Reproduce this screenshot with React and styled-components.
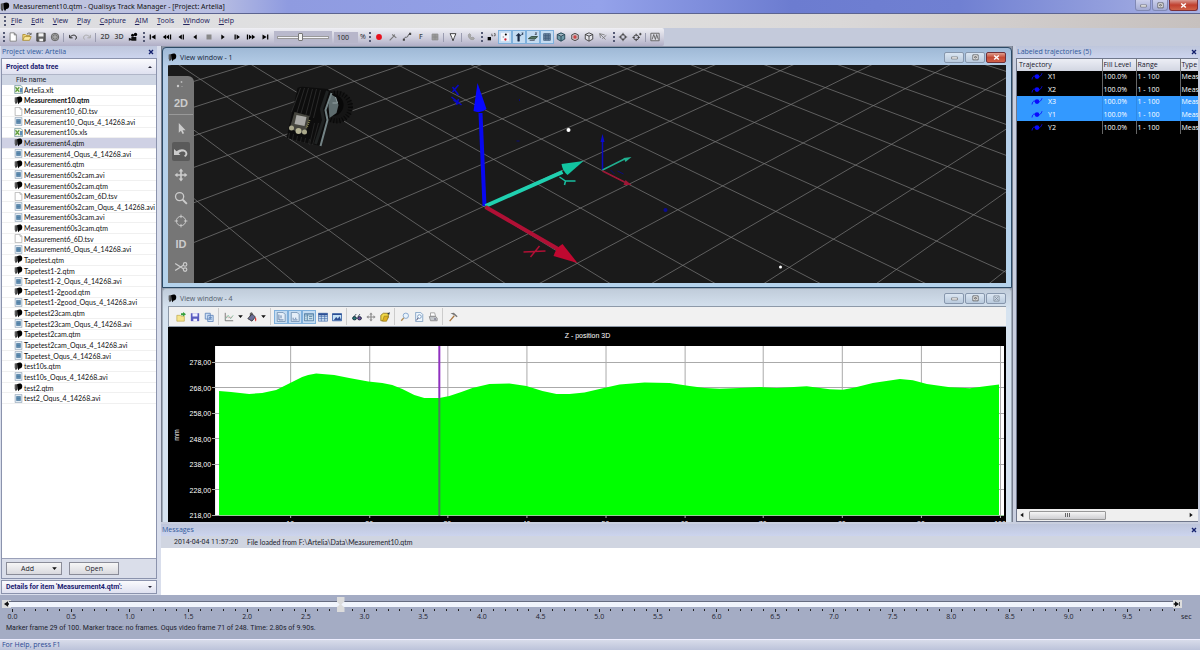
import React, { useState } from 'react';
import styled, { createGlobalStyle, css } from 'styled-components';

const files = [
  ['xls', 'Artelia.xlt'],
  ['qtm', 'Measurement10.qtm'],
  ['tsv', 'Measurement10_6D.tsv'],
  ['avi', 'Measurement10_Oqus_4_14268.avi'],
  ['xls', 'Measurement10s.xls'],
  ['qtm', 'Measurement4.qtm'],
  ['avi', 'Measurement4_Oqus_4_14268.avi'],
  ['qtm', 'Measurement6.qtm'],
  ['avi', 'Measurement60s2cam.avi'],
  ['qtm', 'Measurement60s2cam.qtm'],
  ['tsv', 'Measurement60s2cam_6D.tsv'],
  ['avi', 'Measurement60s2cam_Oqus_4_14268.avi'],
  ['avi', 'Measurement60s3cam.avi'],
  ['qtm', 'Measurement60s3cam.qtm'],
  ['tsv', 'Measurement6_6D.tsv'],
  ['avi', 'Measurement6_Oqus_4_14268.avi'],
  ['qtm', 'Tapetest.qtm'],
  ['qtm', 'Tapetest1-2.qtm'],
  ['avi', 'Tapetest1-2_Oqus_4_14268.avi'],
  ['qtm', 'Tapetest1-2good.qtm'],
  ['avi', 'Tapetest1-2good_Oqus_4_14268.avi'],
  ['qtm', 'Tapetest23cam.qtm'],
  ['avi', 'Tapetest23cam_Oqus_4_14268.avi'],
  ['qtm', 'Tapetest2cam.qtm'],
  ['avi', 'Tapetest2cam_Oqus_4_14268.avi'],
  ['avi', 'Tapetest_Oqus_4_14268.avi'],
  ['qtm', 'test10s.qtm'],
  ['avi', 'test10s_Oqus_4_14268.avi'],
  ['qtm', 'test2.qtm'],
  ['avi', 'test2_Oqus_4_14268.avi'],
];

const menus = ['File', 'Edit', 'View', 'Play', 'Capture', 'AIM', 'Tools', 'Window', 'Help'];

const trajectories = ['X1', 'X2', 'X3', 'Y1', 'Y2'];

// every drawing lives on a 12x12 canvas
const icons = {
  qtm: (
    <>
      <path d="M1 2l3-.5V9L2.500 11 1 8z" fill="#222" />
      <path d="M4 1.500C7 0 10.500 0 11 3.500c.2 3-1 5-3.500 5L6 11 4.500 8z" fill="#000" />
      <path d="M2.500 2v7" stroke="#ddd" strokeWidth=".7" />
    </>
  ),
  xls: (
    <>
      <path d="M1 .5h8l2.500 2.500v8.500H1z" fill="#eef3e6" stroke="#6a8f9b" />
      <path d="M2 3l5 6M7 3L2 9" stroke="#5f9e3a" strokeWidth="1.600" />
      <path d="M8 4h3v6H8z" fill="#5e8db8" />
    </>
  ),
  tsv: <path d="M1.500 .5h6.500l2.500 2.500v8.500h-9zM8 .5V3h2.500" fill="#fff" stroke="#aaa" />,
  avi: (
    <>
      <path d="M1.500 .5h9v11h-9z" fill="#e2ecf4" stroke="#9ab" />
      <path d="M3 3h6v6H3z" fill="#3f7199" />
      <path d="M3 5h6M3 7h6" stroke="#8fb5d0" strokeWidth=".7" />
    </>
  ),
  newFile: <path d="M2.500 1h5l2.500 2.500V11H2.500zM7.500 1v2.500H10" fill="#fff" stroke="#777" />,
  open: (
    <>
      <path d="M1 10V3h3l1 1h4v2" fill="#f4d878" stroke="#a98b30" />
      <path d="M1 10l2-4.500h8L9 10z" fill="#fbe99c" stroke="#a98b30" />
      <path d="M6 2.500C8 .5 10 1 10.500 3M9 2.800h2V1" fill="none" stroke="#555" />
    </>
  ),
  save: (
    <>
      <path d="M1 1.500h10v9.500H1z" fill="#666" stroke="#333" />
      <path d="M3 1.500h6v4H3zM4 8h4.500v3H4z" fill="#f2f2f2" />
    </>
  ),
  saveBlue: (
    <>
      <path d="M1 1.500h10v9.500H1z" fill="#5a5cc0" />
      <path d="M3 1.500h6v4H3zM4 8h4.500v3H4z" fill="#eef" />
    </>
  ),
  gear: (
    <>
      <circle cx="6" cy="6" r="4.500" fill="#aaa" stroke="#555" />
      <circle cx="6" cy="6" r="2.500" fill="#ddd" stroke="#555" />
      <circle cx="6" cy="6" r=".8" fill="#444" />
    </>
  ),
  undo: <path d="M2 3.500v3.500h3.500M2.500 6.500C4 3.500 9 2.500 10 6c.3 1.500-.4 2.500-1.500 3" fill="none" stroke="#222" strokeWidth="1.200" />,
  redo: <path d="M10 3.500v3.500H6.500M9.500 6.500C8 3.500 3 2.500 2 6c-.3 1.500.4 2.500 1.500 3" fill="none" stroke="#aaa" strokeWidth="1.200" />,
  camera: (
    <>
      <path d="M4 6h6v4.500H4zM1 7l3 1v1.500l-3 1z" fill="#111" />
      <circle cx="5.500" cy="3.800" r="1.800" />
      <circle cx="9" cy="3" r="2" />
    </>
  ),
  first: <path d="M2 3h1.500v6H2zM9 3v6L4 6z" />,
  fastBack: <path d="M5 3v6L1 6zM8.500 3v6L5 6zM9.500 3H11v6H9.500z" />,
  stepBack: <path d="M7 3v6L3 6zM8 3h1.500v6H8z" />,
  playBack: <path d="M8 3v6L4 6z" />,
  stop: <path d="M3 3h6v6H3z" fill="#888" />,
  play: <path d="M4 3v6l4-3z" />,
  step: <path d="M5.500 3v6l4-3zM3 3h1.500v6H3z" />,
  fastForward: <path d="M7 3v6l4-3zM3.500 3v6L7 6zM1 3h1.500v6H1z" />,
  last: <path d="M3 3v6l5-3zM8.500 3H10v6H8.500z" />,
  record: <circle cx="6" cy="6" r="3.500" fill="#e8101c" />,
  marker: <path d="M2 10l5-5M5 3l5 4M7 5l1-2" stroke="#777" strokeWidth="1.300" fill="none" />,
  curve: (
    <>
      <path d="M2 9C4 4 6 8 7 5s2-3 3-3" fill="none" stroke="#444" />
      <path d="M1 8h2.500v2.500H1zM8.500 1H11v2.500H8.500z" fill="#444" />
    </>
  ),
  region: <path d="M2.500 2.500h7v7h-7zM2.500 5h7M2.500 7h7M5 2.500v7M7 2.500v7" fill="#aaa" stroke="#888" />,
  filter: <path d="M2.500 2h7L7.500 6.500 6 10.500 4.500 6.500z" fill="#fff" stroke="#222" />,
  phone: <path d="M3 3c-1 3 2 7 6 6l1-1.500L8 6 7 7 5 5l1-1-1.500-2z" fill="#aaa" stroke="#999" />,
  label: (
    <>
      <path d="M2 6h4v4H2z" />
      <path d="M7 2v2.500h1.500M9.500 2h1.500v2.500h-1.500" fill="none" stroke="#333" strokeWidth=".8" />
    </>
  ),
  points: (
    <>
      <path d="M1 1h10v10H1z" fill="#f2f6fc" />
      <circle cx="7" cy="3" r="1.200" />
      <circle cx="4" cy="6" r="1" fill="#999" />
      <circle cx="6.500" cy="9" r="1.400" fill="#d02030" />
    </>
  ),
  axis: <path d="M4.500 11V4.500H2.500L5.500 1.500 8.500 4.500H6.500V11zM9 1h2M11 1L9 3h2" stroke="#1b2a44" strokeWidth=".6" fill="#1b2a44" />,
  floor: (
    <>
      <path d="M.5 8L4 5.500h7.500L8.500 8.500z" fill="#5b7a6a" stroke="#23402f" />
      <path d="M2 10h6M8.500 1h2L8.500 3h2" stroke="#223" fill="none" strokeWidth=".8" />
    </>
  ),
  grid: <path d="M2 2h8v8H2zM2 4h8M2 6h8M2 8h8M4 2v8M6 2v8M8 2v8" fill="#8aa0b8" stroke="#3c5878" strokeWidth=".9" />,
  cubeTeal: <path d="M6 1l4.500 2v5.500L6 11 1.500 8.500V3zM1.500 3L6 5l4.500-2M6 5v6" fill="#6f9aa8" stroke="#1d3d4c" />,
  cubeRed: (
    <>
      <path d="M6 1.500l4 2v5L6 10.500 2 8.500v-5z" fill="#c8b4b8" stroke="#444" />
      <circle cx="6" cy="6" r="2" fill="#c44" />
    </>
  ),
  cube: <path d="M6 1l4.500 2v5.500L6 11 1.500 8.500V3zM1.500 3L6 5l4.500-2M6 5v6" fill="#e4e4ea" stroke="#333" />,
  arrowCut: <path d="M2 2l7 7M2 2l1 5M2 2l6 1.500M5 8l5-4" fill="none" stroke="#777" />,
  crosshair: (
    <>
      <circle cx="6" cy="6" r="3" fill="none" stroke="#333" />
      <path d="M6 1v3.500M6 7.500V11M1 6h3.500M7.500 6H11" stroke="#333" />
    </>
  ),
  crosshairPlus: (
    <>
      <circle cx="5" cy="6.500" r="3" fill="none" stroke="#333" />
      <path d="M5 2v3M5 8v3M.5 6.500h3M6.500 6.500h3M8.500 2.500h3M10 1v3" stroke="#333" />
    </>
  ),
  graph: <path d="M1 1.500h10v9H1zM2.500 9l2-6 2 6 1.500-6L10 9" fill="#dcdce4" stroke="#555" />,
  openGreen: (
    <>
      <path d="M1 11V4h4l1 1h4v6z" fill="#f6e48c" stroke="#b39b3a" strokeWidth=".7" />
      <path d="M6 1.500h2.500V0L12 2.800 8.500 5.500V4H6z" fill="#36a03c" />
    </>
  ),
  copy: <path d="M1.500 1.500h6v7h-6zM4.500 4h6.500v7.500H4.500zM6 6.500h3.500M6 8.500h3.500" fill="#cfe0f5" stroke="#5b82b8" />,
  axes: (
    <>
      <path d="M1.500 1v9.500H11" fill="none" stroke="#666" />
      <path d="M2 8l3-4 3 4 3-4" fill="none" stroke="#7b9" />
      <path d="M2 4l3 3 5-1" fill="none" stroke="#c99" strokeWidth=".7" />
    </>
  ),
  bucket: (
    <>
      <path d="M1 8L6 2l4 4-4 5z" fill="#6b6f98" stroke="#333" />
      <path d="M10 6c1.500 1.500 1.500 4 .5 5.500-1-1-1.300-3-.5-5.500" fill="#d33" />
      <path d="M4 5V1.500l2-.5v3" fill="none" stroke="#333" />
    </>
  ),
  pageAxis: (
    <>
      <path d="M1.500 .5h7l2.500 2.500v8.500H1.500z" fill="#e4eef8" stroke="#6d8dad" />
      <path d="M3.500 3v6.500H9M6 4v3.500" fill="none" stroke="#4c6f9c" />
    </>
  ),
  pageDots: (
    <>
      <path d="M1.500 .5h7l2.500 2.500v8.500H1.500z" fill="#e4eef8" stroke="#6d8dad" />
      <path d="M3 9.500h6M3 7.500h1.500M6 7.500h1.500" fill="none" stroke="#4c6f9c" />
    </>
  ),
  legend: <path d="M.5 2h11v8.500H.5zM.5 3.500h11M4 3v7M6 5.500h4M6 8h4M1.800 5.500h1M1.800 8h1" fill="#cfe4ee" stroke="#2f628f" strokeWidth=".8" />,
  table: (
    <>
      <path d="M.5 1.500h11v9.500H.5zM.5 5.500h11M.5 8h11M4 2v9M8 2v9" fill="#d4e6f6" stroke="#4068a8" strokeWidth=".8" />
      <path d="M.5 1.500h11V4H.5z" fill="#2c4f94" />
    </>
  ),
  picture: (
    <>
      <path d="M.5 2h11v8.500H.5z" fill="#c6e2f5" stroke="#2c58a0" />
      <path d="M.5 2h11v1.500H.5zM2 10l3-4 2 2 2-3 2 5z" fill="#2c4f94" />
    </>
  ),
  glasses: (
    <>
      <path d="M2 6l3-3.500M7 6l2.500-3.500" stroke="#234" />
      <ellipse cx="3" cy="7.500" rx="2.300" ry="2" fill="#2a7a78" stroke="#123" />
      <ellipse cx="9" cy="7.500" rx="2.300" ry="2" fill="#6a4a9a" stroke="#123" />
    </>
  ),
  move: <path d="M6 .5L8 3H6.700v2.300H9V4l2.500 2L9 8V6.700H6.700V9H8l-2 2.500L4 9h1.300V6.700H3V8L.5 6 3 4v1.300h2.300V3H4z" fill="currentColor" />,
  box3d: (
    <>
      <path d="M1 4l3-2.500h6V7l-3 3.500H1z" fill="#f0d848" stroke="#8c7418" />
      <path d="M5 5h5l-2 6H3z" fill="#e0b020" stroke="#8c7418" strokeWidth=".7" />
      <path d="M8.500 2.500L11.500 0v3z" fill="#234" />
    </>
  ),
  zoom: (
    <>
      <circle cx="7" cy="4.500" r="3.200" fill="#e8f3fc" stroke="#7a9cc8" />
      <path d="M4.500 7L1.500 10.500" stroke="#b08a50" strokeWidth="1.600" />
    </>
  ),
  zoomPage: (
    <>
      <path d="M2 .5h6l2.500 2.500v8.500H2z" fill="#eef5fc" stroke="#7a9cc0" />
      <circle cx="6.500" cy="5.500" r="2.200" fill="#fff" stroke="#6a8fb8" />
      <path d="M5 7L3 10" stroke="#557" strokeWidth="1.200" />
    </>
  ),
  printer: (
    <>
      <path d="M3 1h5l1 4H3z" fill="#fff" stroke="#999" />
      <path d="M1.500 5.500h8l1.500 2v3H3z" fill="#c4c8cc" stroke="#888" />
      <circle cx="8.500" cy="8.500" r="1.300" fill="#889" />
    </>
  ),
  hammer: (
    <>
      <path d="M2 11l5.500-6.500" stroke="#a8743c" strokeWidth="1.400" />
      <path d="M3 1.500l4-.5 4.500 4-1 1.200L7.500 4z" fill="#777" />
    </>
  ),
  caret: <path d="M2 4h8L6 8.500z" fill="#111" />,
  up: <path d="M3 7.500h6L6 4.500z" fill="#223" />,
  down: <path d="M3 4.500h6L6 7.500z" fill="#223" />,
  left: <path d="M8 2.500v7L3.500 6z" fill="#111" />,
  right: <path d="M4 2.500v7L8.500 6z" fill="#111" />,
  rangeStart: <path d="M9 2v8L3 6zM9 5h2v2H9z" fill="#111" />,
  rangeEnd: <path d="M3 2v8l6-4zM1 5h2v2H1zM9.500 3h1v6h-1z" fill="#111" />,
  dots: (
    <>
      <circle cx="3" cy="8" r="1.200" fill="#ccc" />
      <circle cx="6.500" cy="4" r=".9" fill="#bbb" />
      <circle cx="7" cy="8.500" r=".5" fill="#bbb" />
    </>
  ),
  pointer: <path d="M3.500 1v9l2-2 1.500 3 1.400-.7L7 7.500h2.800z" fill="#ccc" />,
  rotate: <path d="M0 3.500V8.500h5.500L4 7C6 5 9.500 5 9.800 7.200c.1.800-.4 1.400-1.200 1.800l.9 1.200c1.400-.7 2.200-1.900 1.900-3.400C10.800 3.300 5.500 2.300 2.200 5.400z" fill="#ccc" />,
  lens: (
    <>
      <circle cx="4.800" cy="4.800" r="3.500" fill="none" stroke="#ccc" strokeWidth="1.100" />
      <path d="M7.500 7.500l3.500 3.500" stroke="#ccc" strokeWidth="1.600" />
    </>
  ),
  target: (
    <>
      <circle cx="6" cy="6" r="4" fill="none" stroke="#ccc" strokeWidth=".8" />
      <path d="M6 .5v3M6 8.500v3M.5 6h3M8.500 6h3" stroke="#ccc" strokeWidth=".8" />
    </>
  ),
  scissors: (
    <>
      <path d="M1 3l7 4.500M1 9l7-4.500" stroke="#ccc" strokeWidth="1.100" />
      <circle cx="9.500" cy="3.800" r="1.500" fill="none" stroke="#ccc" />
      <circle cx="9.500" cy="8.200" r="1.500" fill="none" stroke="#ccc" />
    </>
  ),
  traj: (
    <>
      <path d="M0 9C1 3 4 5 6 6s5-1 6-4.500" fill="none" stroke="#0a0aff" />
      <circle cx="6" cy="5.500" r="2.800" fill="#0a0aff" />
    </>
  ),
  close: <path d="M3 3l6 6M9 3L3 9" stroke="currentColor" strokeWidth="2" />,
  minimize: <path d="M1 5h10v3.500H1z" fill="#fff" stroke="#555" />,
  maximize: <path d="M1.500 1.500h9v8.500h-9zM4.500 4.500h3v2.500h-3z" fill="#fff" stroke="#555" strokeWidth="1.400" />,
  cross: <path d="M2 2.500l8 7M10 2.500l-8 7" stroke="#fff" strokeWidth="2.600" />,
  crossGray: <path d="M1.500 1.500h9v9h-9zM3 3l6 6M9 3L3 9" stroke="#78828f" fill="none" strokeWidth="1.200" />,
};

function Icon({ name, size = 10 }) {
  return (
    <svg width={size} height={size} viewBox="0 0 12 12" aria-hidden="true">
      {icons[name]}
    </svg>
  );
}

function Tools({ names, pressed = [] }) {
  return names.map((name, i) => {
    if (name === '|') return <Separator key={i} />;
    if (name === ':') return <Grip key={i} />;
    const text = name.startsWith('#');
    return (
      <ToolButton key={i} aria-label={name.replace('#', '')} $on={pressed.includes(name)} $narrow={name === 'caret'}>
        {text ? name.slice(1) : <Icon name={name} size={name === 'caret' ? 7 : 10} />}
      </ToolButton>
    );
  });
}

// floor square corner (i, j) to view coordinates
function floor(i, j) {
  const w = 1 - 0.0445 * i + 0.041 * j;
  const x = (113 + 147.5 * i + 168 * j) / w;
  const y = (610 + 65.9 * i - 62 * j) / w;
  return [372 + x / 3, y / 3 - 5];
}

function FloorGrid() {
  const lines = [];
  for (let i = -20; i <= 8; i++) lines.push([floor(i, -10), floor(i, 16)]);
  for (let j = -10; j <= 16; j++) lines.push([floor(-20, j), floor(8, j)]);
  return (
    <g stroke="#7c7c7c" strokeWidth=".7">
      {lines.map(([a, b], n) => (
        <line key={n} x1={a[0]} y1={a[1]} x2={b[0]} y2={b[1]} />
      ))}
    </g>
  );
}

function Scene() {
  return (
    <SceneSvg viewBox="0 0 839 218" preserveAspectRatio="xMidYMid slice" role="img" aria-label="3D view">
      <FloorGrid />
      {/* camera */}
      <g>
        <circle cx="169" cy="42" r="16" fill="#141414" />
        <circle cx="169" cy="42" r="14" fill="none" stroke="#080808" strokeWidth="5" strokeDasharray="1 2" />
        <circle cx="165" cy="40" r="11" fill="#080808" />
        <path d="M130 23q3-2 8-1l22 2 6 5-13 52-34-8z" fill="#0d0d0d" />
        <path d="M133 23l-9 24M137 23l-8 26M141 23l-8 27M145 24l-7 27M149 24l-7 28M153 25l-7 28" stroke="#303030" strokeWidth=".8" />
        <path d="M122 68l-1 5M126 69l-1 6M130 71l-1 5M134 72l-1 5M138 73l-1 5M142 74l-1 5M147 58l-5 22M151 58l-6 22" stroke="#2a2a2a" strokeWidth=".8" />
        <path d="M163 29l5 3 3 8-2 8-7 5-1-12z" fill="#5e6c6e" />
        <path d="M168 32l2 6h-5" fill="none" stroke="#94a2a4" />
        <path d="M160 26l-6 18 2 11-8 24" fill="none" stroke="#202323" strokeWidth="3" />
        <path d="M164 28l-6 17 2 10-7 26" fill="none" stroke="#748486" strokeWidth="2" />
        <path d="M127 47l15 4-4 18-16-5z" fill="#45453e" />
        <path d="M129 50l10 2-2 9-10-2z" fill="#a9a9a6" />
        <circle cx="124" cy="63" r="2.500" fill="#aaa88c" />
        <circle cx="131" cy="66" r="3" fill="#b7b596" />
        <circle cx="137" cy="67" r="2.500" fill="#a9a88a" />
        <path d="M142 55l-3 8" stroke="#8c8a55" strokeWidth="2" strokeDasharray="1 1" />
      </g>
      {/* main axes */}
      <path d="M317 141L313 48" stroke="#0808f0" strokeWidth="4" />
      <path d="M310 18l9 26q-6 5-13 2z" fill="#0808ff" />
      <path d="M318 141l77-34" stroke="#20d0b0" strokeWidth="4" />
      <path d="M416 96l-16 14q-5-4-6-11z" fill="#12c4a0" />
      <path d="M318 142l76 44" stroke="#b01035" strokeWidth="4" />
      <path d="M410 198l-24-7q3-9 9-12z" fill="#c00830" />
      <path d="M285 22l6 8M291 20l-6 7M286 35l5 4M291 34l-2 6M284 32l10 8" stroke="#0808c8" strokeWidth="1.500" />
      <path d="M356 187l22-1M363 192l9-11" stroke="#b01035" strokeWidth="1.500" />
      <path d="M392 112l6 4 10 0M398 116l-1 4" fill="none" stroke="#18bfa0" strokeWidth="1.500" />
      {/* lab axes */}
      <path d="M435 105V75" stroke="#0a0ac0" strokeWidth="1.500" />
      <path d="M435 69l2 8h-4z" fill="#0a0ad0" />
      <path d="M435 105l22-11" stroke="#20b090" strokeWidth="1.500" />
      <path d="M464 92l-6 5-2-4z" fill="#20b090" />
      <path d="M435 106l22 11" stroke="#a01535" strokeWidth="1.500" />
      <path d="M464 120l-8 0 2-5z" fill="#a01535" />
      <path d="M443 105l4 4M450 106l6 3M352 34v2M349 76h3" stroke="#0a0a78" />
      <circle cx="498" cy="145" r="2" fill="#0a0a90" />
      <circle cx="401" cy="65" r="2" fill="#fff" />
      <circle cx="613" cy="202" r="1.500" fill="#fff" />
    </SceneSvg>
  );
}

const curve = [
  [220, 391], [232, 392], [250, 394], [263, 393], [277, 390], [291, 383], [303, 377], [309, 375], [317, 373.5], [335, 375],
  [350, 378], [369, 381.5], [383, 383], [393, 385], [403, 389], [415, 395], [425, 398], [440, 398], [450, 396],
  [462, 392], [473, 388], [490, 384], [510, 383.5], [527, 386], [543, 391], [557, 394], [570, 394], [585, 392.5],
  [600, 389], [620, 384.500], [645, 382.500], [670, 383], [690, 386], [705, 388], [720, 388.700], [740, 388],
  [760, 387], [777, 388], [807, 386.300], [830, 389.300], [843, 389.700], [855, 387.500], [873, 383], [900, 379],
  [913, 380.300], [927, 384], [950, 387.300], [970, 388.300], [987, 386], [999, 384.500],
];

function Plot() {
  const area = `M${curve.map(([x, y]) => `${x - 169} ${y - 328}`).join('L')}V187H51z`;
  const columns = [122, 201, 279, 358, 437, 516, 594, 673, 752, 831];
  return (
    <PlotSvg viewBox="0 -1 837 195" preserveAspectRatio="none" role="img" aria-label="Z - position 3D">
      <text x="419" y="10" textAnchor="middle">Z - position 3D</text>
      <rect x="47" y="18" width="788" height="170" fill="#fff" />
      <g stroke="#aaa">
        {columns.map(x => (
          <path key={x} d={`M${x}.500 18V190`} />
        ))}
        {[34, 59, 85, 110, 136, 161, 187].map(y => (
          <path key={y} d={`M44 ${y}.500H835`} />
        ))}
      </g>
      <path d={area} fill="#0f0" />
      <path d="M51 187.500H835" stroke="#9c9" />
      <path d="M271 18v52" stroke="#9030c0" strokeWidth="2" />
      <path d="M271 70v118" stroke="#4c7f5c" strokeWidth="2" />
      {[278, 268, 258, 248, 238, 228, 218].map((v, n) => (
        <text key={v} x="43" y={37 + Math.round(n * 25.5)} textAnchor="end">{v},00</text>
      ))}
      {columns.map((x, n) => (
        <text key={x} x={x} y="198" textAnchor="middle">{(n + 1) * 10}</text>
      ))}
      <text transform="translate(11 107) rotate(-90)" textAnchor="middle">mm</text>
    </PlotSvg>
  );
}

function WindowControls({ active }) {
  return (
    <Controls>
      <ChildButton aria-label="Minimize"><Icon name="minimize" size={7} /></ChildButton>
      <ChildButton aria-label="Maximize"><Icon name="maximize" size={7} /></ChildButton>
      <ChildButton aria-label="Close" $red={active}><Icon name={active ? 'cross' : 'crossGray'} size={7} /></ChildButton>
    </Controls>
  );
}

function App() {
  const [selected, setSelected] = useState('Measurement4.qtm');
  const [time, setTime] = useState(2.8);

  return (
    <Page>
      <GlobalStyle />
      <TitleBar>
        <Icon name="qtm" size={10} />
        <h1>Measurement10.qtm - Qualisys Track Manager - [Project: Artelia]</h1>
        <Controls>
          <FrameButton aria-label="Minimize"><Icon name="minimize" size={7} /></FrameButton>
          <FrameButton aria-label="Restore"><Icon name="maximize" size={7} /></FrameButton>
          <FrameButton aria-label="Close" $red><Icon name="cross" size={7} /></FrameButton>
        </Controls>
      </TitleBar>

      <MenuBar>
        <Grip />
        {menus.map(m => (
          <button key={m}><u>{m[0]}</u>{m.slice(1)}</button>
        ))}
      </MenuBar>

      <ToolRow>
        <Toolbar>
          <Tools names={[':', 'newFile', 'open', 'save', 'gear', '|', 'undo', 'redo', '|', '#2D', '#3D', 'camera', ':', 'first', 'fastBack', 'stepBack', 'playBack', 'stop', 'play', 'step', 'fastForward', 'last']} />
          <Speed>
            <input type="range" aria-label="Playback speed" defaultValue="45" />
          </Speed>
          <Percent aria-label="Speed percent" defaultValue="100" />
          <span>%</span>
          <Tools
            names={[':', 'record', 'marker', 'curve', '#F', 'region', '|', 'filter', '|', 'phone', ':', 'label', 'points', 'axis', 'floor', 'grid', 'cubeTeal', 'cubeRed', 'cube', 'arrowCut', ':', 'crosshair', 'crosshairPlus', '|', 'graph']}
            pressed={['points', 'axis', 'floor', 'grid']}
          />
        </Toolbar>
      </ToolRow>

      <Workspace>
        <Project>
          <PanelTitle>
            Project view: Artelia
            <button aria-label="Close project view"><Icon name="close" size={8} /></button>
          </PanelTitle>
          <Tree>
            <TreeTitle>Project data tree<Icon name="up" size={8} /></TreeTitle>
            <TreeHead>File name</TreeHead>
            <FileList>
              {files.map(([type, name]) => (
                <File
                  key={name}
                  $active={name === selected}
                  $bold={name === 'Measurement10.qtm'}
                  onClick={() => setSelected(name)}
                >
                  <Icon name={type} size={9} />
                  {name}
                </File>
              ))}
            </FileList>
            <Actions>
              <ActionButton $wide>Add<Icon name="caret" size={7} /></ActionButton>
              <ActionButton>Open</ActionButton>
            </Actions>
          </Tree>
          <Details>Details for item '{selected}':<Icon name="down" size={8} /></Details>
        </Project>

        <Center>
          <Upper>
            <Desktop>
              <Child $active>
                <ChildTitle>
                  <Icon name="qtm" size={9} />
                  <h2>View window - 1</h2>
                  <WindowControls active />
                </ChildTitle>
                <View3D>
                  <Scene />
                  <ViewTools>
                    <ViewTool aria-label="Volume"><Icon name="dots" size={12} /></ViewTool>
                    <ViewTool $last>2D</ViewTool>
                    <ViewTool aria-label="Select"><Icon name="pointer" size={13} /></ViewTool>
                    <ViewTool aria-label="Rotate" $on><Icon name="rotate" size={14} /></ViewTool>
                    <ViewTool aria-label="Move"><Icon name="move" size={14} /></ViewTool>
                    <ViewTool aria-label="Zoom"><Icon name="lens" size={14} /></ViewTool>
                    <ViewTool aria-label="Center"><Icon name="target" size={14} /></ViewTool>
                    <ViewTool>ID</ViewTool>
                    <ViewTool aria-label="Cut"><Icon name="scissors" size={14} /></ViewTool>
                  </ViewTools>
                </View3D>
              </Child>
              <Child>
                <ChildTitle>
                  <Icon name="qtm" size={9} />
                  <h2>View window - 4</h2>
                  <WindowControls />
                </ChildTitle>
                <ChartTools>
                  <Tools
                    names={['openGreen', 'saveBlue', 'copy', '|', 'axes', 'caret', 'bucket', 'caret', '|', 'pageAxis', 'pageDots', 'legend', 'table', 'picture', '|', 'glasses', 'move', 'box3d', '|', 'zoom', 'zoomPage', 'printer', '|', 'hammer']}
                    pressed={['pageAxis', 'pageDots', 'legend']}
                  />
                </ChartTools>
                <Plot />
              </Child>
            </Desktop>

            <Labeled>
              <PanelTitle>
                Labeled trajectories (5)
                <button aria-label="Close trajectories"><Icon name="close" size={8} /></button>
              </PanelTitle>
              <TableBox>
                <Table>
                  <thead>
                    <tr><th>Trajectory</th><th>Fill Level</th><th>Range</th><th>Type</th></tr>
                  </thead>
                  <tbody>
                    {trajectories.map(t => (
                      <TrajectoryRow key={t} $active={t === 'X3' || t === 'Y1'}>
                        <td><Icon name="traj" size={12} />{t}</td>
                        <td>100.0%</td>
                        <td>1 - 100</td>
                        <td>Meas</td>
                      </TrajectoryRow>
                    ))}
                  </tbody>
                </Table>
                <Scrollbar>
                  <button aria-label="Scroll left"><Icon name="left" size={8} /></button>
                  <Thumb />
                  <button aria-label="Scroll right"><Icon name="right" size={8} /></button>
                </Scrollbar>
              </TableBox>
            </Labeled>
          </Upper>

          <Messages>
            <PanelTitle>
              Messages
              <button aria-label="Close messages"><Icon name="close" size={8} /></button>
            </PanelTitle>
            <Message><time>2014-04-04 11:57:20</time><span>File loaded from F:\Artelia\Data\Measurement10.qtm</span></Message>
          </Messages>
        </Center>
      </Workspace>

      <Timeline>
        <Track>
          <button aria-label="Range start"><Icon name="rangeStart" size={8} /></button>
          <input type="range" aria-label="Time" min="0" max="9.9" step="0.1" value={time} onChange={e => setTime(Number(e.target.value))} />
          <button aria-label="Range end"><Icon name="rangeEnd" size={8} /></button>
        </Track>
        <RulerRow>
          <Ruler>
            {Array.from({ length: 100 }, (_, i) => (
              <Tick key={i} $major={i % 5 === 0}>{i % 5 === 0 ? (i / 10).toFixed(1) : ''}</Tick>
            ))}
          </Ruler>
          <Unit>sec</Unit>
        </RulerRow>
        <p>Marker frame 29 of 100. Marker trace: no frames. Oqus video frame 71 of 248. Time: 2.80s of 9.90s.</p>
      </Timeline>
      <StatusBar>For Help, press F1</StatusBar>
    </Page>
  );
}

export default App;

const GlobalStyle = createGlobalStyle`
  * {
    box-sizing: border-box;
  }
  body {
    margin: 0;
    font: 7px/10px 'Open Sans', sans-serif;
    color: #1c1c2c;
  }
  h1, h2, p, ul {
    margin: 0;
    padding: 0;
    font-size: 7px;
    font-weight: normal;
  }
  button {
    font: inherit;
    color: inherit;
    padding: 0;
    border: 0;
    background: none;
  }
  svg {
    display: block;
    flex-shrink: 0;
  }
`;

const Page = styled.div`
  display: flex;
  flex-direction: column;
  height: 100vh;
  min-height: 560px;
  overflow: hidden;
  background: #c9cfdf;
`;

const TitleBar = styled.header`
  display: flex;
  align-items: center;
  height: 14px;
  padding-right: 2px;
  flex-shrink: 0;
  border-bottom: 1px solid #5c6490;
  background: linear-gradient(90deg, #c2c6de 0, #b8bee2 18%, #8f9be0 24%, #94a2ea 50%, #6c7cd0 66%, #7080d2 80%, #a9b2e4 100%);

  h1 {
    flex: 1;
    padding-left: 3px;
    font-family: 'Noto Sans', sans-serif;
    color: #111;
  }
`;

const Controls = styled.div`
  display: flex;
  gap: 1px;
`;

const FrameButton = styled.button`
  display: flex;
  align-items: center;
  justify-content: center;
  width: ${p => (p.$red ? 29 : 16)}px;
  height: 11px;
  margin-bottom: 2px;
  border: 1px solid ${p => (p.$red ? '#7c3038' : '#8088b4')};
  border-top: 0;
  border-radius: 0 0 3px 3px;
  background: ${p => (p.$red ? 'linear-gradient(#d89a92, #c0402f 50%, #cf6248)' : 'linear-gradient(#ccd0ec, #a4abd4)')};
`;

const MenuBar = styled.nav`
  display: flex;
  align-items: center;
  height: 14px;
  padding-left: 1px;
  flex-shrink: 0;
  background: linear-gradient(90deg, #dcdce0, #e2e2e1 40%, #dad8d8 70%, #c6c0be);

  button {
    margin: 0 5px 0 4px;
    font-family: 'Noto Sans', sans-serif;
    color: #26265e;
  }
`;

const Grip = styled.span`
  width: 6px;
  height: 10px;
  border-left: 2px dotted #555a75;
  margin-left: 3px;
  margin-right: -3px;
  flex-shrink: 0;
`;

const ToolRow = styled.div`
  display: flex;
  height: 18px;
  flex-shrink: 0;
  background: #c4cadb;
`;

const Toolbar = styled.div`
  display: flex;
  align-items: center;
  padding-right: 2px;
  background: linear-gradient(#efeff4, #cfcfdd 55%, #b0aec6);
  border-radius: 0 2px 2px 0;
`;

const Separator = styled.i`
  width: 1px;
  height: 9px;
  margin: 0 2px 0 1px;
  background: #9a9cb0;
  flex-shrink: 0;
`;

const ToolButton = styled.button`
  display: flex;
  align-items: center;
  justify-content: center;
  width: ${p => (p.$narrow ? 9 : 14)}px;
  height: 14px;
  font-weight: 600;
  color: #444;
  flex-shrink: 0;
  ${p =>
    p.$on &&
    css`
      background: #c4dcf2;
      border: 1px solid #7fb0dc;
    `}
`;

const rangeBase = css`
  appearance: none;
  margin: 0;
  min-width: 0;
  background: none;
`;

const Speed = styled.div`
  display: flex;
  align-items: center;
  width: 58px;
  height: 12px;
  margin-left: 2px;
  padding: 0 3px;
  background: #b9b9cc;

  input {
    ${rangeBase}
    width: 100%;
    height: 10px;

    &::-webkit-slider-runnable-track {
      height: 3px;
      background: #f4f4f8;
      border: 1px solid #999;
    }
    &::-webkit-slider-thumb {
      appearance: none;
      width: 5px;
      height: 8px;
      margin-top: -4px;
      border: 1px solid #777;
      border-radius: 1px;
      background: #f2f2f2;
    }
  }
`;

const Percent = styled.input`
  width: 24px;
  height: 11px;
  margin: 0 2px;
  padding: 0 3px;
  border: 0;
  background: #b7b6ca;
  font: inherit;
  color: #222;
`;

const Workspace = styled.div`
  display: flex;
  flex: 1;
  min-height: 0;
`;

const Project = styled.aside`
  display: flex;
  flex-direction: column;
  width: 161px;
  padding: 0 4px 1px 1px;
  flex-shrink: 0;
  background: #d9deec;
`;

const PanelTitle = styled.div`
  display: flex;
  align-items: center;
  justify-content: space-between;
  height: 12px;
  padding: 0 2px 0 1px;
  flex-shrink: 0;
  background: linear-gradient(#bec6dc, #ccd4ee);
  color: #30599c;

  button {
    color: #14206c;
  }
`;

const Tree = styled.section`
  display: flex;
  flex-direction: column;
  flex: 1;
  min-height: 0;
  border: 1px solid #8b93ad;
  background: #fff;
`;

const TreeTitle = styled.div`
  display: flex;
  align-items: center;
  justify-content: space-between;
  height: 15px;
  padding: 0 2px 0 4px;
  flex-shrink: 0;
  font-family: Roboto, sans-serif;
  font-weight: 700;
  color: #1a2070;
  background: linear-gradient(#fafafd, #dfe1f0);
`;

const TreeHead = styled.div`
  height: 11px;
  padding-left: 14px;
  flex-shrink: 0;
  border-top: 1px solid #b0b6c8;
  background: #cfd6e4;
  font-family: Roboto, sans-serif;
`;

const FileList = styled.ul`
  display: grid;
  grid-template-columns: minmax(0, 1fr);
  grid-auto-rows: 1fr;
  height: 319px;
  list-style: none;
  font-family: Lato, Roboto, sans-serif;
`;

const File = styled.li`
  display: flex;
  align-items: center;
  gap: 1px;
  min-height: 0;
  padding-left: 12px;
  border-bottom: 1px solid #f0f0f0;
  white-space: nowrap;
  color: #111;
  font-weight: ${p => (p.$bold ? 'bold' : 'normal')};
  background: ${p => (p.$active ? '#cfd1e4' : '#fff')};
`;

const Actions = styled.div`
  display: flex;
  gap: 7px;
  margin-top: auto;
  padding: 3px 4px;
  border-top: 1px solid #9aa0b8;
  background: #dadeea;
`;

const ActionButton = styled.button`
  display: flex;
  align-items: center;
  justify-content: ${p => (p.$wide ? 'space-between' : 'center')};
  width: ${p => (p.$wide ? 56 : 50)}px;
  height: 13px;
  padding: ${p => (p.$wide ? '0 3px 0 14px' : 0)};
  border: 1px solid #8a8c98;
  background: linear-gradient(#f6f6f6, #d9d9de);
`;

const Details = styled(TreeTitle)`
  height: 14px;
  margin-top: 1px;
  border: 1px solid #8b93ad;
  white-space: nowrap;
`;

const Center = styled.main`
  display: flex;
  flex-direction: column;
  flex: 1;
  min-width: 0;
`;

const Upper = styled.div`
  display: flex;
  flex: 1;
  min-height: 0;
  gap: 3px;
  padding-bottom: 2px;
`;

const Desktop = styled.section`
  display: grid;
  grid-template-columns: minmax(0, 1fr);
  grid-template-rows: minmax(0, 241fr) minmax(0, 234fr);
  flex: 1;
  min-width: 0;
  padding-top: 1px;
  border-left: 1px solid #777e8e;
  border-right: 1px solid #777e8e;
  background: #8d95a6;
`;

const Child = styled.article`
  display: flex;
  flex-direction: column;
  min-height: 0;
  padding: 0 5px ${p => (p.$active ? 4 : 0)}px;
  border: 1px solid ${p => (p.$active ? '#2c4a66' : '#a0abb8')};
  border-bottom-width: ${p => (p.$active ? 1 : 0)}px;
  border-radius: 4px 4px 0 0;
  background: ${p => (p.$active ? 'linear-gradient(#9fb9d6, #b8d0ea 20px, #b5d3ec)' : 'linear-gradient(#c0ccda, #d6e3f0 20px)')};
  color: ${p => (p.$active ? '#1c2c44' : '#5a6470')};
`;

const ChildTitle = styled.div`
  display: flex;
  align-items: center;
  height: 17px;
  padding-top: 2px;
  flex-shrink: 0;

  h2 {
    flex: 1;
    padding-left: 3px;
    font-family: 'Noto Sans', sans-serif;
  }
`;

const ChildButton = styled.button`
  display: flex;
  align-items: center;
  justify-content: center;
  width: 20px;
  height: 11px;
  border: 1px solid ${p => (p.$red ? '#703038' : '#8797ad')};
  border-radius: 2px;
  background: ${p => (p.$red ? 'linear-gradient(#e0a090, #c44a34 50%, #d0604a)' : 'linear-gradient(#dbe6f2, #b9cadd)')};
`;

const View3D = styled.div`
  position: relative;
  flex: 1;
  min-height: 0;
  overflow: hidden;
  background: #1a1a1a;
`;

const SceneSvg = styled.svg`
  width: 100%;
  height: 100%;
`;

const ViewTools = styled.div`
  position: absolute;
  left: 0;
  top: 11px;
  bottom: 0;
  display: flex;
  flex-direction: column;
  align-items: center;
  width: 26px;
  border-radius: 0 6px 0 0;
  background: #767676;
  color: #ccc;
`;

const ViewTool = styled.button`
  display: flex;
  align-items: center;
  justify-content: center;
  width: ${p => (p.$last ? 24 : 18)}px;
  height: 19px;
  margin: 2px 0;
  flex-shrink: 0;
  border-radius: 2px;
  font: bold 11px 'Liberation Sans', sans-serif;
  color: #ccc;
  background: ${p => (p.$on ? '#5a5a5a' : 'none')};

  &:first-child {
    height: 15px;
    margin: 0;
  }
  ${p =>
    p.$last &&
    css`
      height: 24px;
      margin: 0 0 2px;
      border-bottom: 1px solid #999;
      border-radius: 0;
    `}
`;

const ChartTools = styled.div`
  display: flex;
  align-items: center;
  height: 21px;
  padding-left: 5px;
  flex-shrink: 0;
  border: 1px solid #8d99a8;
  border-right: 0;
  background: #f1f1f1;

  i {
    height: 17px;
    margin: 0 3px 0 2px;
    background: #ccc;
  }
  button {
    color: #8a8a8a;
  }
`;

const PlotSvg = styled.svg`
  width: 100%;
  flex: 1;
  min-height: 0;
  background: #000;

  text {
    font: 7px 'Liberation Sans', sans-serif;
    fill: #fff;
  }
`;

const Labeled = styled.aside`
  display: flex;
  flex-direction: column;
  width: 184px;
  flex-shrink: 0;
`;

const TableBox = styled.div`
  display: flex;
  flex-direction: column;
  justify-content: space-between;
  flex: 1;
  min-height: 0;
  margin-right: 2px;
  overflow: hidden;
  border: 1px solid #70788c;
  border-right: 0;
  background: #000;
`;

const Table = styled.table`
  width: 100%;
  height: 75px;
  table-layout: fixed;
  border-collapse: collapse;
  line-height: 10px;
  color: #fff;

  th, td {
    padding: 0 0 0 1px;
    font-weight: normal;
    text-align: left;
    overflow: hidden;
    white-space: nowrap;
    border-right: 1px solid #777;
  }
  th:nth-child(1) {
    width: 85px;
    padding-left: 2px;
  }
  th:nth-child(2) {
    width: 34px;
  }
  th:nth-child(3) {
    width: 44px;
  }
  th:last-child, td:last-child {
    border-right: 0;
  }
  th {
    color: #15152c;
    background: linear-gradient(#eceef5, #d2d6e2);
  }
  thead tr {
    height: 12px;
  }
  td:first-child {
    padding-left: 14px;
  }
  td svg {
    display: inline-block;
    margin-right: 5px;
    vertical-align: top;
    height: 10px;
  }
`;

const TrajectoryRow = styled.tr`
  background: ${p => (p.$active ? '#3399ff' : '#000')};

  td {
    border-color: ${p => (p.$active ? '#2f8ae4' : '#666')};
  }
`;

const Scrollbar = styled.div`
  display: flex;
  align-items: center;
  height: 12px;
  flex-shrink: 0;
  background: #efefef;

  button {
    width: 12px;
    padding-left: 1px;
  }
  button:last-child {
    margin-left: auto;
  }
`;

const Thumb = styled.div`
  width: 77px;
  height: 9px;
  border: 1px solid #989898;
  border-radius: 1px;
  background:
    repeating-linear-gradient(90deg, #666 0 1px, transparent 1px 2px) center / 5px 4px no-repeat,
    linear-gradient(#f5f5f5, #cfcfd2);
`;

const Messages = styled.section`
  height: 71px;
  flex-shrink: 0;
  background: #fff;
`;

const Message = styled.p`
  display: flex;
  gap: 9px;
  height: 12px;
  padding-left: 13px;
  font-family: Roboto, sans-serif;
  line-height: 12px;
  background: #d0d5e1;

  span {
    font-family: Lato, Roboto, sans-serif;
  }
`;

const Timeline = styled.section`
  height: 44px;
  padding: 4px 0 0 2px;
  flex-shrink: 0;
  background: #a4acc4;

  p {
    padding-left: 4px;
    font-family: Roboto, sans-serif;
  }
`;

const Track = styled.div`
  display: flex;
  align-items: center;
  height: 10px;
  margin-right: 18px;

  button {
    display: flex;
    align-items: center;
    width: 9px;
    height: 8px;
    background: #ddd;
  }
  input {
    ${rangeBase}
    flex: 1;
    height: 16px;
    margin: 0 -2px;

    &::-webkit-slider-runnable-track {
      height: 6px;
      background: #f0f4fc;
      border-top: 1px solid #666c80;
    }
    &::-webkit-slider-thumb {
      appearance: none;
      width: 8px;
      height: 15px;
      margin-top: -5px;
      background: #dcdcdc;
      clip-path: polygon(0 0, 100% 0, 100% 30%, 60% 50%, 100% 70%, 100% 100%, 0 100%, 0 70%, 40% 50%, 0 30%);
    }
  }
`;

const RulerRow = styled.div`
  display: flex;
  height: 14px;
  padding-left: 10px;
`;

const Ruler = styled.div`
  display: flex;
  justify-content: space-between;
  flex: 1;
`;

const Tick = styled.span`
  display: flex;
  flex-direction: column;
  align-items: center;
  width: 1px;
  white-space: nowrap;

  &::before {
    content: '';
    width: 1px;
    height: ${p => (p.$major ? 3 : 2)}px;
    flex-shrink: 0;
    background: #222;
  }
`;

const Unit = styled.span`
  width: 24px;
  padding: 3px 0 0 5px;
`;

const StatusBar = styled.footer`
  height: 11px;
  padding-left: 2px;
  flex-shrink: 0;
  border-top: 1px solid #eef;
  background: linear-gradient(#d8dcea, #bcc3da);
  color: #2a4a94;
`;
